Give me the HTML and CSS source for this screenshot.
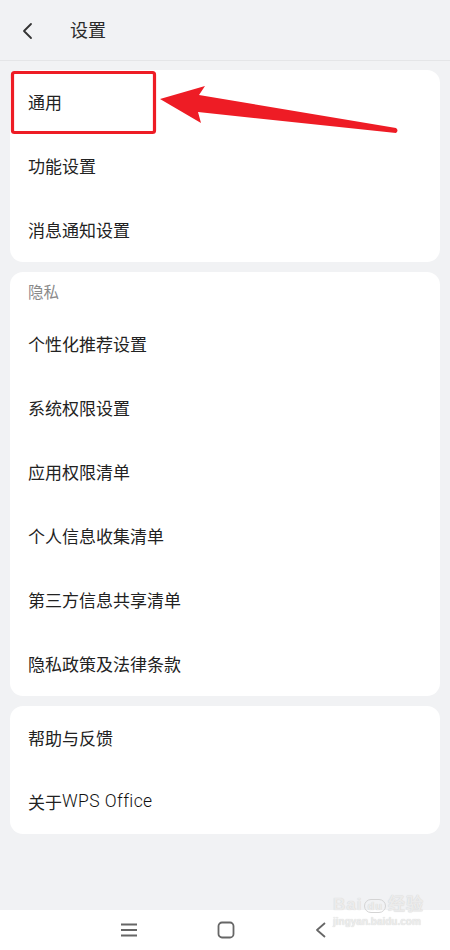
FILE: index.html
```html
<!DOCTYPE html>
<html lang="zh-CN">
<head>
<meta charset="utf-8">
<title>设置</title>
<link rel="stylesheet" href="styles.css">
</head>
<body>
<div class="screen">
  <header class="topbar">
    <svg class="back" width="14" height="18" viewBox="0 0 14 18"><path d="M10 2 L3 9 L10 16" fill="none" stroke="#333" stroke-width="1.8" stroke-linecap="round" stroke-linejoin="round"/></svg>
    <h1 class="title">设置</h1>
  </header>
  <main class="content">
    <section class="card">
      <div class="row">通用</div>
      <div class="row">功能设置</div>
      <div class="row">消息通知设置</div>
    </section>
    <section class="card">
      <div class="label">隐私</div>
      <div class="row">个性化推荐设置</div>
      <div class="row">系统权限设置</div>
      <div class="row">应用权限清单</div>
      <div class="row">个人信息收集清单</div>
      <div class="row">第三方信息共享清单</div>
      <div class="row">隐私政策及法律条款</div>
    </section>
    <section class="card">
      <div class="row">帮助与反馈</div>
      <div class="row">关于<span class="latin">WPS Office</span></div>
    </section>
  </main>
  <nav class="navbar">
    <svg width="18" height="16" viewBox="0 0 18 16"><path d="M1 2.5H17M1 8H17M1 13.5H17" stroke="#666" stroke-width="1.8"/></svg>
    <svg width="18" height="18" viewBox="0 0 18 18"><rect x="1.5" y="1.5" width="15" height="15" rx="3.5" fill="none" stroke="#666" stroke-width="1.8"/></svg>
    <svg width="14" height="18" viewBox="0 0 14 18"><path d="M11 2 L3 9 L11 16" fill="none" stroke="#666" stroke-width="1.8" stroke-linejoin="round"/></svg>
  </nav>
  <svg class="annot" width="450" height="950" viewBox="0 0 450 950">
    <rect x="12.5" y="72.5" width="142" height="60" rx="2" fill="none" stroke="#ee1c25" stroke-width="3.2"/>
    <path d="M160 99 L205 86 L199 95 L396 128 Q399 130.5 396 133 L198 112 L201 123 Z" fill="#ee1c25"/>
  </svg>
  <div class="watermark">
    <div class="wm-top">Bai<span class="wm-du">du</span>经验</div>
    <div class="wm-url">jingyan.baidu.com</div>
  </div>
</div>
</body>
</html>
```
FILE: styles.css
```css
* { box-sizing: border-box; }
html, body { margin: 0; padding: 0; }
body {
  width: 450px;
  height: 950px;
  background: #f1f2f4;
  font-family: "Roboto", "Noto Sans CJK SC", "Noto Sans", sans-serif;
  color: #222;
  overflow: hidden;
}
.screen {
  position: relative;
  width: 450px;
  height: 950px;
  display: flex;
  flex-direction: column;
}
.topbar {
  height: 61px;
  display: flex;
  align-items: center;
  padding-left: 21px;
  border-bottom: 1px solid #e4e5e7;
  flex-shrink: 0;
}
.back { margin-top: 1px; }
.title {
  margin: 0 0 0 35px;
  font-size: 18px;
  font-weight: 400;
  color: #2a2a2a;
  padding-bottom: 2px;
}
.content {
  flex: 1;
  display: flex;
  flex-direction: column;
  gap: 10px;
  padding: 9px 10px 0;
}
.card {
  background: #fff;
  border-radius: 13px;
  display: flex;
  flex-direction: column;
}
.row {
  height: 64px;
  display: flex;
  align-items: center;
  padding-left: 18px;
  padding-bottom: 2px;
  font-size: 17px;
  color: #222;
}
.latin {
  font-size: 17.5px;
  letter-spacing: 0.4px;
  font-weight: 300;
  color: #111;
}
.label {
  height: 40px;
  display: flex;
  align-items: center;
  padding-left: 18px;
  padding-bottom: 2px;
  font-size: 15.5px;
  color: #8a8a8a;
}
.navbar {
  height: 40px;
  background: #fff;
  display: flex;
  align-items: center;
  justify-content: center;
  gap: 79px;
  padding-right: 3px;
  flex-shrink: 0;
}
.annot {
  position: absolute;
  left: 0;
  top: 0;
  pointer-events: none;
}
.watermark {
  position: absolute;
  left: 333px;
  top: 896px;
  color: rgba(240,240,240,0.9);
  text-shadow: 0 0 1px #c8c8c8;
  font-family: "Liberation Sans", sans-serif;
  line-height: 1;
}
.wm-top { font-size: 17px; font-weight: 700; letter-spacing: 1px; }
.wm-du { font-size: 11px; border: 1px solid #d4d4d4; border-radius: 8px; padding: 0 2px; margin: 0 2px; }
.wm-url { font-size: 10px; font-weight: 700; margin-top: 4px; }
```
